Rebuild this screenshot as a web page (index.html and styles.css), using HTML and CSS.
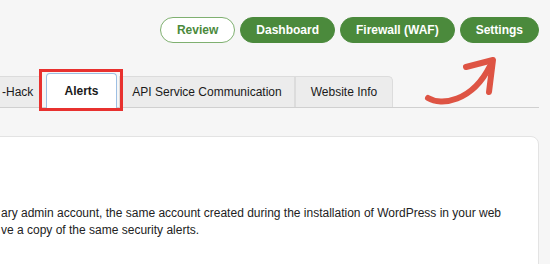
FILE: index.html
```html
<!DOCTYPE html>
<html>
<head>
<meta charset="utf-8">
<link rel="stylesheet" href="styles.css">
</head>
<body>
<div class="page">
  <div class="actions">
    <a class="btn btn-outline">Review</a>
    <a class="btn">Dashboard</a>
    <a class="btn">Firewall (WAF)</a>
    <a class="btn">Settings</a>
  </div>
  <div class="tabs">
    <div class="tab tab-cut">-Hack</div>
    <div class="tab tab-active">Alerts</div>
    <div class="tab tab-api">API Service Communication</div>
    <div class="tab tab-info">Website Info</div>
  </div>
  <div class="card">
    <p class="desc">ary admin account, the same account created during the installation of WordPress in your web<br>ve a copy of the same security alerts.</p>
  </div>
  <div class="highlight"></div>
  <svg class="arrow" viewBox="415 50 90 60" width="90" height="60">
    <path d="M428 98 C 441 106, 472 102, 490 66" fill="none" stroke="#de5444" stroke-width="6" stroke-linecap="round" stroke-linejoin="round"/>
    <path d="M466 67 L493 60 L489 92" fill="none" stroke="#de5444" stroke-width="6" stroke-linecap="round" stroke-linejoin="round"/>
  </svg>
</div>
</body>
</html>
```

FILE: styles.css
```css
html, body {
  margin: 0;
  padding: 0;
  background: #f6f6f6;
  font-family: "Liberation Sans", Arial, sans-serif;
  color: #1e1e1e;
  overflow: hidden;
}
.page {
  position: relative;
  width: 550px;
  height: 264px;
  overflow: hidden;
}
.actions {
  display: flex;
  justify-content: flex-end;
  gap: 5px;
  padding: 17px 11px 0 0;
}
.btn {
  display: flex;
  align-items: center;
  height: 26px;
  box-sizing: border-box;
  padding: 0 15px;
  border-radius: 13px;
  background: #4b8a3c;
  border: 1px solid #4b8a3c;
  color: #fff;
  font-size: 12px;
  font-weight: bold;
}
.btn-outline {
  background: #fff;
  color: #4b8a3c;
  border-color: #7fb070;
  padding: 0 16px;
}
.tabs {
  display: flex;
  align-items: flex-end;
  margin-top: 29px;
  width: 539px;
  height: 36px;
  box-sizing: border-box;
  border-bottom: 1px solid #d0d0d0;
}
.tab {
  height: 31px;
  box-sizing: border-box;
  display: flex;
  align-items: center;
  justify-content: center;
  font-size: 12px;
  background: #ececec;
  border: 1px solid #dcdcdc;
  border-bottom: none;
  color: #1a1a1a;
}
.tab-cut {
  width: 42px;
  justify-content: flex-start;
  padding-left: 2px;
  border-left: none;
  margin-right: 4px;
}
.tab-active {
  width: 71px;
  height: 35px;
  background: #fff;
  border-color: #9dbfe3;
  border-radius: 4px 4px 0 0;
  font-weight: bold;
  margin-right: 2px;
  position: relative;
  top: 1px;
}
.tab-api {
  width: 176px;
}
.tab-info {
  width: 98px;
  border-left: 1px solid #dcdcdc;
  border-radius: 0 5px 0 0;
}
.card {
  margin: 28px 0 0 -10px;
  width: 549px;
  height: 140px;
  box-sizing: border-box;
  background: #fff;
  border: 1px solid #e3e3e3;
  border-radius: 8px;
  padding: 68px 0 0 10px;
}
.desc {
  margin: 0;
  font-size: 12px;
  line-height: 17px;
  color: #222;
  white-space: nowrap;
}
.highlight {
  position: absolute;
  left: 39px;
  top: 69px;
  width: 84px;
  height: 42px;
  box-sizing: border-box;
  border: 3px solid #e8312f;
}
.arrow {
  position: absolute;
  left: 415px;
  top: 50px;
}
```
